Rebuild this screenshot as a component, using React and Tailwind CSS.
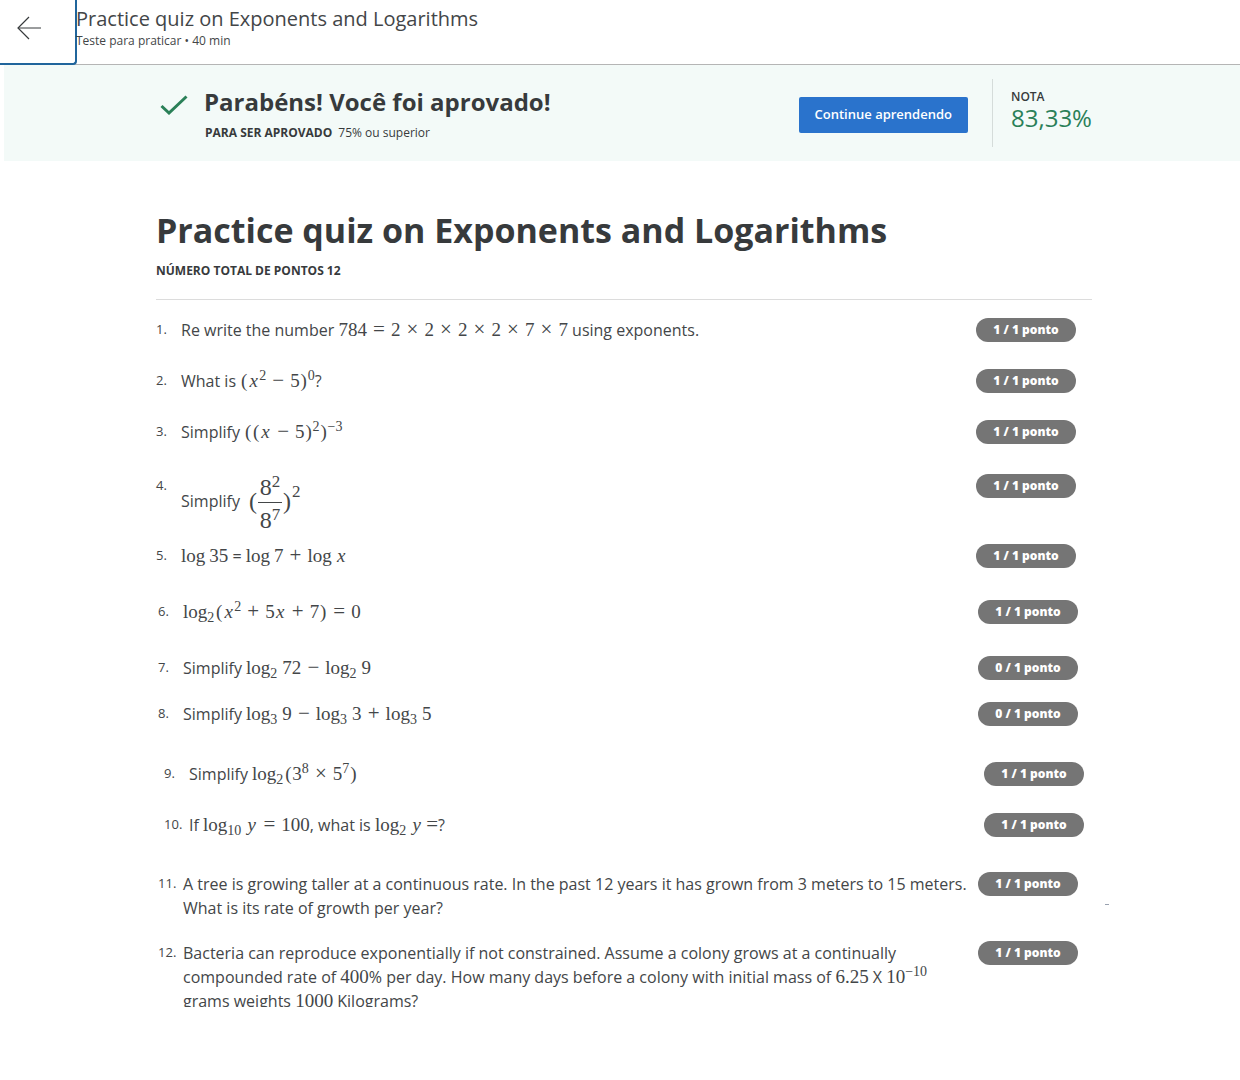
const M = ({ children }) => (
  <span className="font-['Liberation_Serif',serif] text-[19px] leading-none whitespace-nowrap">{children}</span>
);
const Op = ({ children }) => (
  <span className="mx-1 inline-block w-4 text-center text-[21px] leading-none">{children}</span>
);
const X = ({ children = "x" }) => <i className="inline-block w-[11px] text-center">{children}</i>;
const P = ({ children }) => <span className="inline-block w-2 text-center">{children}</span>;
const Sup = ({ children }) => <sup className="text-[14px]">{children}</sup>;
const Log = ({ base }) => (
  <>
    log{base && <sub className="pr-px text-[14px]">{base}</sub>}
  </>
);
const Gap = () => <span className="inline-block w-1" />;

const Fraction = () => (
  <span className="flex items-center font-['Liberation_Serif',serif] text-[24px] leading-none">
    <span className="w-2.5 pb-1 text-center">(</span>
    <span className="flex w-6 flex-col items-center">
      <span className="flex h-[29px] w-full items-end justify-center border-b border-[#434648] pb-[3px]">
        <span>8<sup className="text-[17px]">2</sup></span>
      </span>
      <span className="flex h-[29px] items-end">
        <span>8<sup className="text-[17px]">7</sup></span>
      </span>
    </span>
    <span className="w-2.5 pb-1 text-center">)</span>
    <span className="pb-6 text-[17px]">2</span>
  </span>
);

const groups = [
  {
    indent: "",
    items: [
      { gap: "pb-[27px]", body: <>Re write the number <M>784<Op>=</Op>2<Op>×</Op>2<Op>×</Op>2<Op>×</Op>2<Op>×</Op>7<Op>×</Op>7</M> using exponents.</> },
      { gap: "pb-[27px]", body: <>What is <M><P>(</P><X /><Sup>2</Sup><Op>−</Op>5<P>)</P><Sup>0</Sup></M>?</> },
      { gap: "pb-[30px]", body: <>Simplify <M><P>(</P><P>(</P><X /><Op>−</Op>5<P>)</P><Sup>2</Sup><P>)</P><Sup>−3</Sup></M></> },
      { gap: "pb-3", body: <span className="flex items-center gap-2"><span className="pb-1">Simplify</span><Fraction /></span> },
      { gap: "pb-8", body: <><M><Log /><Gap />35</M> = <M><Log /><Gap />7<Op>+</Op><Log /><Gap /><X /></M></> },
    ],
  },
  {
    indent: "-mr-0.5 pl-0.5",
    items: [
      { gap: "pb-8", body: <M><Log base="2" /><P>(</P><X /><Sup>2</Sup><Op>+</Op>5<X /><Op>+</Op>7<P>)</P><Op>=</Op>0</M> },
      { gap: "pb-[22px]", score: 0, body: <>Simplify <M><Log base="2" /><Gap />72<Op>−</Op><Log base="2" /><Gap />9</M></> },
      { gap: "pb-9", score: 0, body: <>Simplify <M><Log base="3" /><Gap />9<Op>−</Op><Log base="3" /><Gap />3<Op>+</Op><Log base="3" /><Gap />5</M></> },
    ],
  },
  {
    indent: "-mr-2 pl-2",
    items: [
      { gap: "pb-[27px]", body: <>Simplify <M><Log base="2" /><P>(</P>3<Sup>8</Sup><Op>×</Op>5<Sup>7</Sup><P>)</P></M></> },
      { gap: "pb-[35px]", body: <>If <M><Log base="10" /><Gap /><X>y</X><Op>=</Op>100</M>, what is <M><Log base="2" /><Gap /><X>y</X><Gap /><span className="text-[21px] leading-none">=</span></M>?</> },
    ],
  },
  {
    indent: "-mr-0.5 pl-0.5",
    items: [
      { gap: "pb-[21px]", mark: true, body: <>A tree is growing taller at a continuous rate. In the past 12 years it has grown from 3 meters to 15 meters. What is its rate of growth per year?</> },
      { gap: "pb-0", clip: true, body: <>Bacteria can reproduce exponentially if not constrained. Assume a colony grows at a continually compounded rate of <M>400</M>% per day. How many days before a colony with initial mass of <M>6.25</M> X <M>10<Sup>−10</Sup></M><br />grams weights <M>1000</M> Kilograms?</> },
    ],
  },
];

const starts = [1, 6, 9, 11];

function Question({ n, gap, body, score = 1, clip, mark }) {
  return (
    <li className={`relative flex items-start ${gap}`}>
      <span className="w-[25px] shrink-0 text-[13px] leading-[22px] whitespace-nowrap">{n}.</span>
      <div className={clip ? "max-h-[66px] min-w-0 flex-1 overflow-hidden" : "min-w-0 flex-1"}>{body}</div>
      <span className="h-6 w-[100px] shrink-0 rounded-full bg-[#757575] text-center text-xs leading-6 font-extrabold text-white">
        {score} / 1 ponto
      </span>
      {mark && <span className="absolute top-8 -right-[31px] h-px w-1 bg-gray-400" />}
    </li>
  );
}

export default function App() {
  return (
    <div className="min-h-screen bg-white font-['Open_Sans',sans-serif] text-[#373a3c]">
      <header className="flex h-[65px] border-b border-[#b5b5b5]">
        <button aria-label="Voltar" className="-mb-px flex w-[77px] shrink-0 rounded-br border-r-2 border-b-2 border-[#20659c] bg-white pt-4 pl-[17px]">
          <svg width="24" height="24" viewBox="0 0 24 24" fill="none" stroke="#373a3c" strokeWidth="1.2">
            <path d="M12 1 1 12l11 11" />
            <path d="M1 12h23" strokeWidth="1" />
          </svg>
        </button>
        <div className="-ml-px pt-1.5 text-[#434648]">
          <p className="text-[20px] leading-[26px]">Practice quiz on Exponents and Logarithms</p>
          <p className="text-xs leading-[18px]">Teste para praticar • 40 min</p>
        </div>
      </header>
      <section className="ml-1 bg-[#f3faf8] pl-1">
        <div className="mx-auto flex h-24 max-w-[936px] items-center">
          <svg className="mx-1 mb-4 shrink-0" width="28" height="20" viewBox="0 0 28 20" fill="none" stroke="#2a8058" strokeWidth="3">
            <path d="M1.500 11 9 18 26.500 1.500" />
          </svg>
          <div className="flex-1 pt-0.5 pl-3">
            <h2 className="text-[24px] leading-8 font-bold">Parabéns! Você foi aprovado!</h2>
            <p className="pt-1.5 pl-px text-xs leading-[18px]">
              <b className="mr-1.5">PARA SER APROVADO</b>75% ou superior
            </p>
          </div>
          <div className="pt-1">
            <button className="block h-9 rounded-xs bg-[#2a73cc] px-4 text-[13px] font-semibold text-white">Continue aprendendo</button>
          </div>
          <div className="ml-6 h-[68px] w-[100px] border-l border-[#d5dcda] pt-2 pl-[18px]">
            <p className="text-xs leading-5 font-semibold">NOTA</p>
            <p className="text-[24px] leading-[22px] text-[#2a8058]">83,33%</p>
          </div>
        </div>
      </section>
      <main className="pl-2">
        <div className="mx-auto max-w-[936px] pt-12">
          <h1 className="text-[34px] leading-[42px] font-bold">Practice quiz on Exponents and Logarithms</h1>
          <p className="pt-2.5 text-xs leading-5 font-bold">NÚMERO TOTAL DE PONTOS 12</p>
          <hr className="mt-[18px] border-[#dcdcdc]" />
          <div className="pt-[18px] pr-4 text-[16px] leading-6 text-[#434648]">
            {groups.map((g, i) => (
              <ol key={starts[i]} start={starts[i]} className={g.indent}>
                {g.items.map((q, j) => (
                  <Question key={j} n={starts[i] + j} {...q} />
                ))}
              </ol>
            ))}
          </div>
        </div>
      </main>
    </div>
  );
}
